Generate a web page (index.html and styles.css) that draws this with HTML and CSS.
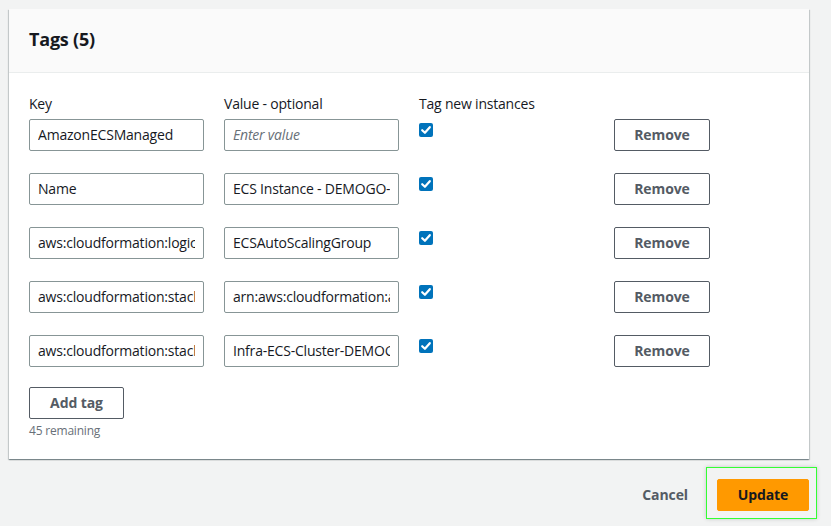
FILE: index.html
```html
<!DOCTYPE html>
<html>
<head>
<meta charset="utf-8">
<link rel="stylesheet" href="styles.css">
</head>
<body>
<div class="page">
  <section class="card">
    <header class="card-header"><h2>Tags (5)</h2></header>
    <div class="card-body">
      <div class="tag-grid">
        <div class="col-label">Key</div>
        <div class="col-label">Value - optional</div>
        <div class="col-label">Tag new instances</div>
        <div></div>

        <input class="text" value="AmazonECSManaged">
        <input class="text" placeholder="Enter value">
        <div class="check-cell"><span class="check"><svg viewBox="0 0 14 14"><path d="M3.2 7.2 L5.9 9.8 L10.8 4.2"/></svg></span></div>
        <div><button class="btn">Remove</button></div>

        <input class="text" value="Name">
        <input class="text" value="ECS Instance - DEMOGO-ECS-Cluster">
        <div class="check-cell"><span class="check"><svg viewBox="0 0 14 14"><path d="M3.2 7.2 L5.9 9.8 L10.8 4.2"/></svg></span></div>
        <div><button class="btn">Remove</button></div>

        <input class="text" value="aws:cloudformation:logical-id">
        <input class="text" value="ECSAutoScalingGroup">
        <div class="check-cell"><span class="check"><svg viewBox="0 0 14 14"><path d="M3.2 7.2 L5.9 9.8 L10.8 4.2"/></svg></span></div>
        <div><button class="btn">Remove</button></div>

        <input class="text" value="aws:cloudformation:stack-id">
        <input class="text" value="arn:aws:cloudformation:ap-southeast-1">
        <div class="check-cell"><span class="check"><svg viewBox="0 0 14 14"><path d="M3.2 7.2 L5.9 9.8 L10.8 4.2"/></svg></span></div>
        <div><button class="btn">Remove</button></div>

        <input class="text" value="aws:cloudformation:stack-name">
        <input class="text" value="Infra-ECS-Cluster-DEMOGO-ECS">
        <div class="check-cell"><span class="check"><svg viewBox="0 0 14 14"><path d="M3.2 7.2 L5.9 9.8 L10.8 4.2"/></svg></span></div>
        <div><button class="btn">Remove</button></div>
      </div>
      <button class="btn add">Add tag</button>
      <div class="hint">45 remaining</div>
    </div>
  </section>
  <footer class="actions">
    <button class="link-btn">Cancel</button>
    <div class="focus-box"><button class="primary">Update</button></div>
  </footer>
</div>
</body>
</html>
```
FILE: styles.css
```css
* { box-sizing: border-box; }
html, body { margin: 0; padding: 0; background: #f2f3f3; }
body {
  font-family: "Open Sans", "Noto Sans", sans-serif;
  font-size: 14px;
  letter-spacing: -0.2px;
  color: #16191f;
  width: 831px;
  height: 526px;
  overflow: hidden;
}
.page { padding: 9px 0 0 9px; }
.card {
  width: 800px;
  background: #fff;
  box-shadow: 0 1px 1px 0 rgba(0,28,36,.3), 1px 1px 1px 0 rgba(0,28,36,.15), -1px 1px 1px 0 rgba(0,28,36,.15);
}
.card-header {
  height: 64px;
  background: #fafafa;
  border-bottom: 1px solid #eaeded;
  padding: 0 20px;
  display: flex;
  align-items: center;
}
.card-header h2 {
  margin: 0;
  font-size: 18px;
  font-weight: 700;
  line-height: 22px;
  padding-bottom: 3px;
}
.card-body { padding: 20px 20px 20px 20px; }
.tag-grid {
  display: grid;
  grid-template-columns: 175px 175px 175px 96px;
  column-gap: 20px;
  row-gap: 22px;
}
.col-label {
  line-height: 22px;
  margin-bottom: -18px;
  color: #16191f;
}
.text {
  width: 175px;
  height: 32px;
  border: 1px solid #879596;
  border-radius: 2px;
  padding: 0 8px 1px;
  font-family: inherit;
  font-size: 14px;
  letter-spacing: -0.2px;
  color: #16191f;
  background: #fff;
  outline: none;
}
.text::placeholder { color: #687078; font-style: italic; }
.check-cell { padding-top: 4px; }
.check {
  display: block;
  width: 14px;
  height: 14px;
  border-radius: 2px;
  background: #0073bb;
}
.check svg { display: block; width: 14px; height: 14px; }
.check path { fill: none; stroke: #fff; stroke-width: 2.2; stroke-linecap: round; stroke-linejoin: round; }
.btn {
  display: block;
  height: 32px;
  width: 96px;
  border: 1px solid #545b64;
  border-radius: 2px;
  background: #fff;
  color: #545b64;
  font-family: inherit;
  font-size: 14px;
  letter-spacing: -0.1px;
  font-weight: 700;
  padding: 0 0 2px;
}
.add { width: 95px; margin-top: 20px; }
.hint {
  font-size: 12px;
  line-height: 16px;
  color: #687078;
  margin-top: 4px;
}
.actions {
  width: 808px;
  margin-top: 8px;
  display: flex;
  justify-content: flex-end;
  align-items: flex-start;
}
.link-btn {
  background: none;
  border: none;
  font-family: inherit;
  font-size: 14px;
  letter-spacing: -0.1px;
  font-weight: 700;
  color: #545b64;
  padding: 0 18px 2px 0;
  height: 32px;
  margin-top: 12px;
}
.focus-box {
  border: 1px solid #33ff33;
  padding: 11px 7px 7px 10px;
  box-shadow: 0 0 4px rgba(0,0,0,.18);
}
.primary {
  display: block;
  width: 92px;
  height: 32px;
  background: #ff9900;
  border: 1px solid #ff9900;
  border-radius: 2px;
  color: #16191f;
  font-family: inherit;
  font-size: 14px;
  letter-spacing: -0.1px;
  font-weight: 700;
  padding: 0 0 2px;
}
```
